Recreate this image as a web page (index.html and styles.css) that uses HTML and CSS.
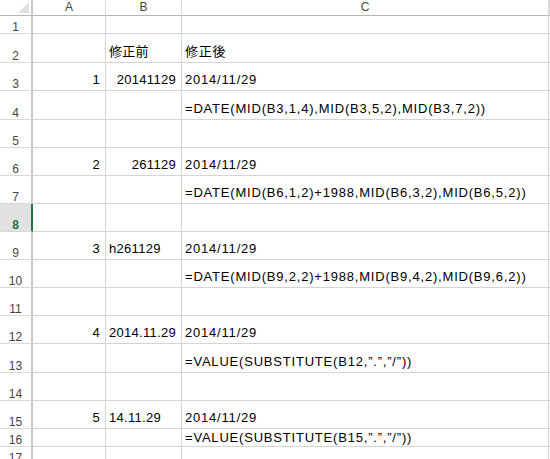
FILE: index.html
```html
<!DOCTYPE html>
<html lang="ja">
<head>
    <meta charset="UTF-8">
    <meta name="viewport" content="width=device-width, initial-scale=1.0">
    <title>日付変換</title>
    <link rel="stylesheet" href="styles.css">
</head>
<body>
    <div class="sheet">
        <!-- 列見出し -->
        <div class="row col-head">
            <div class="corner"><span class="tri"></span></div>
            <div class="ch">A</div>
            <div class="ch">B</div>
            <div class="ch">C</div>
            <div class="ch"></div>
        </div>

        <div class="row short">
            <div class="rh">1</div><div class="cell"></div><div class="cell"></div><div class="cell wide"></div><div class="cell"></div>
        </div>
        <div class="row tall">
            <div class="rh">2</div><div class="cell"></div><div class="cell">修正前</div><div class="cell wide">修正後</div><div class="cell"></div>
        </div>
        <div class="row">
            <div class="rh">3</div><div class="cell num">1</div><div class="cell num">20141129</div><div class="cell wide">2014/11/29</div><div class="cell"></div>
        </div>
        <div class="row tall">
            <div class="rh">4</div><div class="cell"></div><div class="cell"></div><div class="cell wide">=DATE(MID(B3,1,4),MID(B3,5,2),MID(B3,7,2))</div><div class="cell"></div>
        </div>
        <div class="row">
            <div class="rh">5</div><div class="cell"></div><div class="cell"></div><div class="cell wide"></div><div class="cell"></div>
        </div>
        <div class="row">
            <div class="rh">6</div><div class="cell num">2</div><div class="cell num">261129</div><div class="cell wide">2014/11/29</div><div class="cell"></div>
        </div>
        <div class="row">
            <div class="rh">7</div><div class="cell"></div><div class="cell"></div><div class="cell wide">=DATE(MID(B6,1,2)+1988,MID(B6,3,2),MID(B6,5,2))</div><div class="cell"></div>
        </div>
        <div class="row">
            <div class="rh active">8</div><div class="cell"></div><div class="cell"></div><div class="cell wide"></div><div class="cell"></div>
        </div>
        <div class="row">
            <div class="rh">9</div><div class="cell num">3</div><div class="cell">h261129</div><div class="cell wide">2014/11/29</div><div class="cell"></div>
        </div>
        <div class="row">
            <div class="rh">10</div><div class="cell"></div><div class="cell"></div><div class="cell wide">=DATE(MID(B9,2,2)+1988,MID(B9,4,2),MID(B9,6,2))</div><div class="cell"></div>
        </div>
        <div class="row">
            <div class="rh">11</div><div class="cell"></div><div class="cell"></div><div class="cell wide"></div><div class="cell"></div>
        </div>
        <div class="row">
            <div class="rh">12</div><div class="cell num">4</div><div class="cell">2014.11.29</div><div class="cell wide">2014/11/29</div><div class="cell"></div>
        </div>
        <div class="row tall">
            <div class="rh">13</div><div class="cell"></div><div class="cell"></div><div class="cell wide">=VALUE(SUBSTITUTE(B12,”.”,”/”))</div><div class="cell"></div>
        </div>
        <div class="row">
            <div class="rh">14</div><div class="cell"></div><div class="cell"></div><div class="cell wide"></div><div class="cell"></div>
        </div>
        <div class="row">
            <div class="rh">15</div><div class="cell num">5</div><div class="cell">14.11.29</div><div class="cell wide">2014/11/29</div><div class="cell"></div>
        </div>
        <div class="row short">
            <div class="rh">16</div><div class="cell"></div><div class="cell"></div><div class="cell wide">=VALUE(SUBSTITUTE(B15,”.”,”/”))</div><div class="cell"></div>
        </div>
        <div class="row short">
            <div class="rh">17</div><div class="cell"></div><div class="cell"></div><div class="cell wide"></div><div class="cell"></div>
        </div>
    </div>
</body>
</html>
```

FILE: styles.css
```css
body {
    margin: 0;
    padding: 0;
    background-color: #ffffff;
    overflow: hidden;
}

.sheet {
    width: 550px;
    font-family: "Liberation Sans", "Noto Sans CJK JP", sans-serif;
    font-size: 13px;
    color: #000;
}

/* 行: 見出し + A, B, C + 残り */
.row {
    display: grid;
    grid-template-columns: 33px 73px 76px 367px 1fr;
    height: 28px;
}

.row.tall {
    height: 29px;
}

.row.short {
    height: 18px;
}

.row.col-head {
    height: 16px;
}

.cell {
    box-sizing: border-box;
    border-right: 1px solid #d4d4d4;
    border-bottom: 1px solid #d4d4d4;
    display: flex;
    align-items: flex-end;
    padding: 0 2px 3px 3px;
    line-height: 15px;
    letter-spacing: 0.3px;
    white-space: nowrap;
    overflow: hidden;
}

.cell.wide {
    letter-spacing: 0.8px;
}

.row.short .cell {
    padding-bottom: 1px;
}

.cell.num {
    justify-content: flex-end;
    padding-right: 5px;
}

/* 列見出し */
.ch {
    box-sizing: border-box;
    border-right: 1px solid #d9d9d9;
    border-bottom: 1px solid #b6b6b6;
    font-size: 12px;
    line-height: 15px;
    color: #444;
    text-align: center;
}

.corner {
    box-sizing: border-box;
    border-right: 2px solid #c8c8c8;
    border-bottom: 1px solid #b6b6b6;
    position: relative;
}

.tri {
    position: absolute;
    right: 2px;
    bottom: 2px;
    width: 0;
    height: 0;
    border-left: 11px solid transparent;
    border-bottom: 11px solid #dfdfdf;
}

/* 行見出し */
.rh {
    box-sizing: border-box;
    border-right: 2px solid #c8c8c8;
    border-bottom: 1px solid #d9d9d9;
    display: flex;
    align-items: flex-end;
    justify-content: center;
    font-size: 12px;
    line-height: 12px;
    color: #444;
    padding-bottom: 0;
}

.rh.active {
    background-color: #e1e1e1;
    border-right-color: #217346;
    color: #217346;
    font-weight: bold;
}
```
